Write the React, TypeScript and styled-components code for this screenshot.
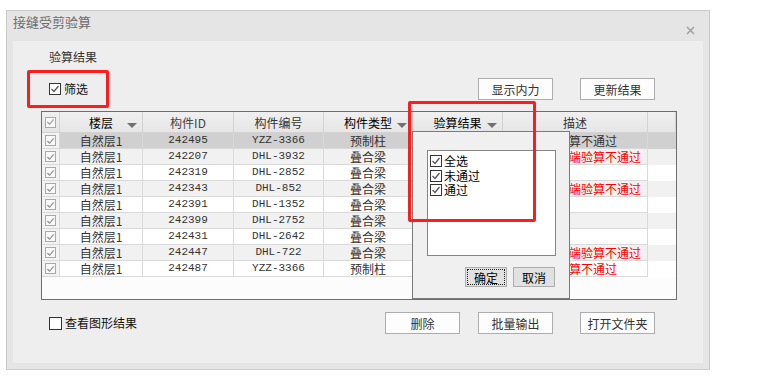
import React from 'react';
import styled, { createGlobalStyle } from 'styled-components';

const GlobalStyle = createGlobalStyle`
  html, body {
    margin: 0;
    padding: 0;
    background: #ffffff;
  }
  body {
    font-family: "Noto Sans CJK SC", "Liberation Sans", sans-serif;
    font-size: 12px;
    color: #333;
  }
  * {
    box-sizing: border-box;
  }
`;

type Row = {
  id: string;
  code: string;
  type: string;
  desc: string;
};

// 验算结果 column sits under the filter popup, so it is left blank here
const rows: Row[] = [
  { id: '242495', code: 'YZZ-3366', type: '预制柱', desc: '柱底验算不通过' },
  { id: '242207', code: 'DHL-3932', type: '叠合梁', desc: '梁左端、右端验算不通过' },
  { id: '242319', code: 'DHL-2852', type: '叠合梁', desc: '' },
  { id: '242343', code: 'DHL-852', type: '叠合梁', desc: '梁左端、右端验算不通过' },
  { id: '242391', code: 'DHL-1352', type: '叠合梁', desc: '' },
  { id: '242399', code: 'DHL-2752', type: '叠合梁', desc: '' },
  { id: '242431', code: 'DHL-2642', type: '叠合梁', desc: '' },
  { id: '242447', code: 'DHL-722', type: '叠合梁', desc: '梁左端、右端验算不通过' },
  { id: '242487', code: 'YZZ-3366', type: '预制柱', desc: '柱底验算不通过' },
];

const COLS = '18px 83px 91px 90px 89px 90px 145px';

const CheckMark = ({ color }: { color: string }) => (
  <svg width="10" height="10" viewBox="0 0 10 10">
    <path d="M1.5 5 L4 7.5 L8.5 2" fill="none" stroke={color} strokeWidth="1.3" />
  </svg>
);

const CloseIcon = () => (
  <svg width="9" height="9" viewBox="0 0 9 9">
    <path d="M1 1 L8 8 M8 1 L1 8" stroke="#9c9c9c" strokeWidth="1.4" />
  </svg>
);

const App = () => {
  return (
    <>
      <GlobalStyle />
      <Window>
        <TitleBar>
          <Title>接缝受剪验算</Title>
          <Close>
            <CloseIcon />
          </Close>
        </TitleBar>
        <Panel>
          <SectionLabel>验算结果</SectionLabel>
          <TopRow>
            <CheckLabel>
              <Box $size={12}>
                <CheckMark color="#555" />
              </Box>
              <span>筛选</span>
            </CheckLabel>
            <Actions>
              <Button>显示内力</Button>
              <Button $ml={27}>更新结果</Button>
            </Actions>
          </TopRow>

          <TableBox>
            <HeaderRow>
              <HeadCell>
                <GridBox>
                  <CheckMark color="#9a9a9a" />
                </GridBox>
              </HeadCell>
              <HeadCell $color="#000">
                楼层
                <Arrow />
              </HeadCell>
              <HeadCell $color="#444">构件ID</HeadCell>
              <HeadCell $color="#333">构件编号</HeadCell>
              <HeadCell $color="#000">
                构件类型
                <Arrow />
              </HeadCell>
              <HeadCell $color="#000">
                验算结果
                <Arrow />
              </HeadCell>
              <HeadCell $color="#333">描述</HeadCell>
              <HeadCell />
            </HeaderRow>

            {rows.map((r, i) => (
              <DataRow key={r.id + i} $bg={i === 0 ? '#d0d0d0' : i % 2 === 1 ? '#f1f1f1' : '#ffffff'}>
                <CheckCell>
                  <GridBox>
                    <CheckMark color="#8c8c8c" />
                  </GridBox>
                </CheckCell>
                <Cell>自然层1</Cell>
                <MonoCell>{r.id}</MonoCell>
                <MonoCell>{r.code}</MonoCell>
                <Cell>{r.type}</Cell>
                <Cell />
                <Cell $color={i === 0 ? '#333' : '#ff0000'}>{r.desc}</Cell>
              </DataRow>
            ))}

            <FilterPopup>
              <FilterList>
                <FilterItem>
                  <Box $size={12}>
                    <CheckMark color="#555" />
                  </Box>
                  <span>全选</span>
                </FilterItem>
                <FilterItem>
                  <Box $size={12}>
                    <CheckMark color="#555" />
                  </Box>
                  <span>未通过</span>
                </FilterItem>
                <FilterItem>
                  <Box $size={12}>
                    <CheckMark color="#555" />
                  </Box>
                  <span>通过</span>
                </FilterItem>
              </FilterList>
              <PopupActions>
                <SmallButton $focused>确定</SmallButton>
                <SmallButton>取消</SmallButton>
              </PopupActions>
            </FilterPopup>
          </TableBox>

          <BottomRow>
            <CheckLabel>
              <Box $size={13} />
              <span>查看图形结果</span>
            </CheckLabel>
            <Actions>
              <Button>删除</Button>
              <Button $ml={18}>批量输出</Button>
              <Button $ml={27}>打开文件夹</Button>
            </Actions>
          </BottomRow>
        </Panel>

        <Highlight $left={20} $top={59} $width={82} $height={38} />
        <Highlight $left={401} $top={90} $width={128} $height={121} />
      </Window>
    </>
  );
};

export default App;

const Window = styled.div`
  position: relative;
  margin: 10px 0 0 6px;
  width: 704px;
  height: 360px;
  border: 1px solid #cbcbcb;
  background: #e5e5e5;
  display: flex;
  flex-direction: column;
`;

const TitleBar = styled.div`
  height: 30px;
  display: flex;
  align-items: flex-start;
  justify-content: space-between;
  padding: 0 14px 0 6px;
`;

const Title = styled.div`
  margin-top: 2px;
  font-size: 13px;
  line-height: 17px;
  color: #6c6c6c;
`;

const Close = styled.div`
  margin-top: 15px;
  width: 9px;
  height: 9px;
  display: flex;
`;

const Panel = styled.div`
  flex: 1;
  margin: 0 6px 6px;
  padding-top: 9px;
  background: #eeeeee;
  display: flex;
  flex-direction: column;
`;

const SectionLabel = styled.div`
  padding-left: 36px;
  line-height: 14px;
  font-size: 12px;
  color: #333;
`;

const TopRow = styled.div`
  margin-top: 14px;
  height: 22px;
  padding: 0 48px 0 36px;
  display: flex;
  align-items: center;
`;

const BottomRow = styled(TopRow)`
  margin-top: 12px;
`;

const CheckLabel = styled.label`
  display: flex;
  align-items: center;
  gap: 3px;
  font-size: 12px;
  line-height: 14px;
  color: #111;
`;

const Box = styled.span<{ $size: number }>`
  width: ${(p) => p.$size}px;
  height: ${(p) => p.$size}px;
  border: 1px solid #333;
  background: #fff;
  display: flex;
  align-items: center;
  justify-content: center;
  flex-shrink: 0;
`;

const GridBox = styled.span`
  width: 11px;
  height: 11px;
  border: 1px solid #a8a8a8;
  background: #f9f9f9;
  display: flex;
  align-items: center;
  justify-content: center;
`;

const Actions = styled.div`
  margin-left: auto;
  display: flex;
`;

const Button = styled.button<{ $ml?: number }>`
  width: 75px;
  height: 22px;
  margin-left: ${(p) => p.$ml ?? 0}px;
  padding: 0;
  border: 1px solid #adadad;
  background: #fdfdfd;
  font-family: "Noto Sans CJK SC", sans-serif;
  font-size: 12px;
  color: #333;
`;

const TableBox = styled.div`
  position: relative;
  margin: 11px 26px 0 28px;
  height: 189px;
  border: 1px solid #6e6e6e;
  background: #fcfcfc;
`;

const HeaderRow = styled.div`
  display: grid;
  grid-template-columns: ${COLS} 1fr;
  height: 21px;
`;

const HeadCell = styled.div<{ $color?: string }>`
  position: relative;
  display: flex;
  align-items: center;
  justify-content: center;
  background: linear-gradient(#f0f0f0, #e6e6e6);
  border-right: 1px solid #d2d2d2;
  border-bottom: 1px solid #d2d2d2;
  font-size: 12px;
  color: ${(p) => p.$color ?? '#333'};
`;

const Arrow = styled.span`
  position: absolute;
  right: 5px;
  bottom: 4px;
  border-left: 5px solid transparent;
  border-right: 5px solid transparent;
  border-top: 5px solid #707070;
`;

const DataRow = styled.div<{ $bg: string }>`
  display: grid;
  grid-template-columns: ${COLS};
  height: 16px;
  background: ${(p) => p.$bg};
`;

const Cell = styled.div<{ $color?: string }>`
  height: 16px;
  border-right: 1px solid #d9d9d9;
  border-bottom: 1px solid #d9d9d9;
  line-height: 15px;
  text-align: center;
  white-space: nowrap;
  overflow: hidden;
  font-family: "Noto Sans CJK SC", sans-serif;
  font-size: 12px;
  color: ${(p) => p.$color ?? '#333'};
`;

const MonoCell = styled(Cell)`
  font-family: "Liberation Mono", monospace;
  font-size: 11px;
`;

const CheckCell = styled.div`
  height: 16px;
  background: #f3f3f3;
  border-right: 1px solid #d9d9d9;
  border-bottom: 1px solid #d9d9d9;
  display: flex;
  align-items: center;
  justify-content: center;
`;

const FilterPopup = styled.div`
  position: absolute;
  left: 370px;
  top: 19px;
  width: 158px;
  height: 168px;
  padding: 18px 13px 0 14px;
  border: 1px solid #7a7a7a;
  background: #f0f0f0;
  display: flex;
  flex-direction: column;
`;

const FilterList = styled.div`
  width: 129px;
  height: 106px;
  padding: 3px 2px 0;
  border: 1px solid #858585;
  background: #ffffff;
`;

const FilterItem = styled.div`
  height: 14.5px;
  line-height: 14px;
  display: flex;
  align-items: center;
  gap: 2px;
  font-size: 12px;
  color: #000;
`;

const PopupActions = styled.div`
  margin-top: 11px;
  margin-right: 1px;
  display: flex;
  justify-content: flex-end;
  gap: 6px;
`;

const SmallButton = styled.button<{ $focused?: boolean }>`
  width: 42px;
  height: 20px;
  padding: 0;
  border: 1px solid #adadad;
  background: #e1e1e1;
  font-family: "Noto Sans CJK SC", sans-serif;
  font-size: 12px;
  color: #000;
  outline: ${(p) => (p.$focused ? '1px dotted #222' : 'none')};
  outline-offset: -3px;
`;

const Highlight = styled.div<{ $left: number; $top: number; $width: number; $height: number }>`
  position: absolute;
  left: ${(p) => p.$left}px;
  top: ${(p) => p.$top}px;
  width: ${(p) => p.$width}px;
  height: ${(p) => p.$height}px;
  border: 3px solid #ff1c1c;
  border-radius: 2px;
  pointer-events: none;
`;
